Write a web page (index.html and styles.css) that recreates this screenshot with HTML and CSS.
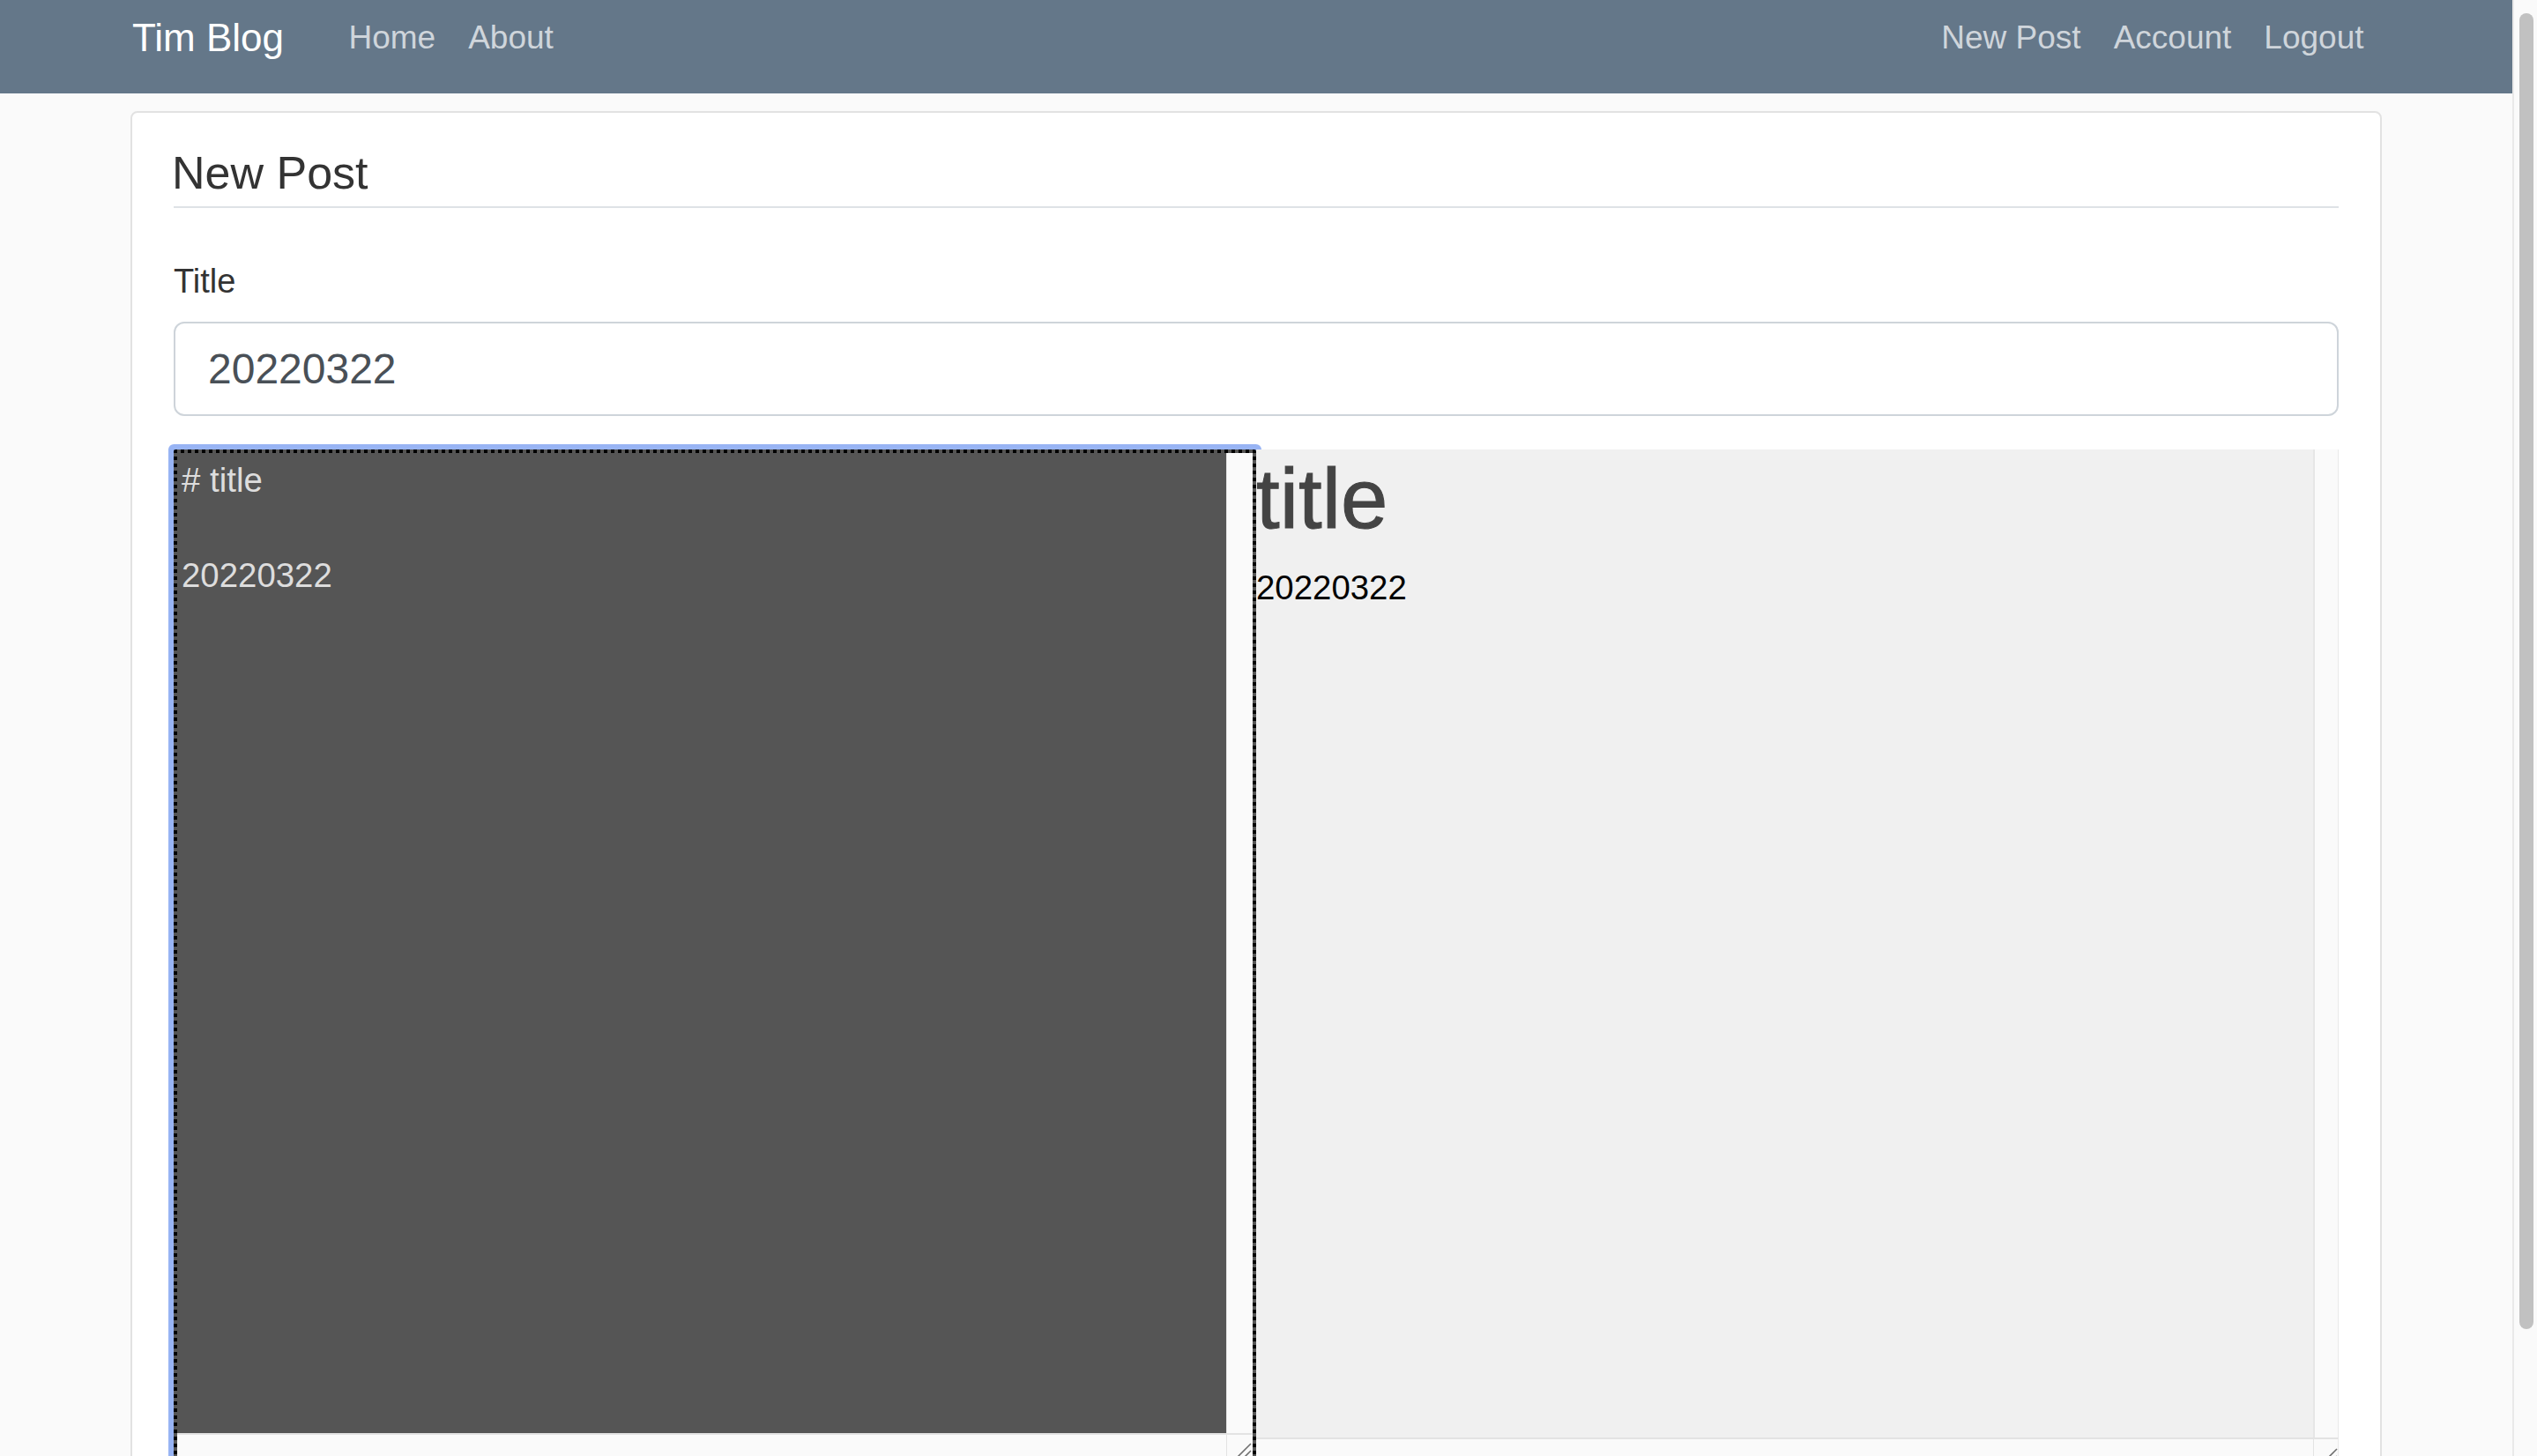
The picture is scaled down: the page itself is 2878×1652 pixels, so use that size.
FILE: index.html
```html
<!DOCTYPE html>
<html lang="en">
<head>
<meta charset="utf-8">
<title>Tim Blog - New Post</title>
<link rel="stylesheet" href="styles.css">
</head>
<body>
<div class="page">
  <div class="main">
    <nav class="navbar">
      <div class="nav-inner">
        <a class="brand" href="#">Tim Blog</a>
        <div class="nav-links">
          <a class="nav-link" href="#">Home</a>
          <a class="nav-link" href="#">About</a>
        </div>
        <div class="nav-links nav-right">
          <a class="nav-link" href="#">New Post</a>
          <a class="nav-link" href="#">Account</a>
          <a class="nav-link" href="#">Logout</a>
        </div>
      </div>
    </nav>
    <div class="container">
      <div class="card">
        <h3 class="card-title">New Post</h3>
        <label class="field-label" for="title">Title</label>
        <input class="title-input" id="title" type="text" value="20220322">
        <div class="editor-row">
          <div class="editor-frame">
            <div class="sbox editor-box">
              <div class="editor-text"># title

20220322</div>
              <div class="vtrack"></div>
              <div class="htrack"></div>
              <div class="corner">
                <svg class="grip" width="30" height="30" viewBox="0 0 30 30"><line x1="12" y1="28" x2="28" y2="12"/><line x1="20" y1="28" x2="28" y2="20"/></svg>
              </div>
            </div>
          </div>
          <div class="sbox preview-box">
            <div class="preview-content">
              <h1 class="preview-h1">title</h1>
              <p class="preview-p">20220322</p>
            </div>
            <div class="vtrack vtrack-preview"></div>
            <div class="htrack"></div>
            <div class="corner corner-preview">
              <svg class="grip" width="29" height="30" viewBox="0 0 29 30"><line x1="12" y1="29" x2="28" y2="13"/><line x1="20" y1="29" x2="28" y2="21"/></svg>
            </div>
          </div>
        </div>
      </div>
    </div>
  </div>
  <div class="scrollbar"><div class="thumb"></div></div>
</div>
</body>
</html>
```

FILE: styles.css
```css
html, body {
  margin: 0;
  padding: 0;
}

body {
  font-family: "Liberation Sans", Arial, Helvetica, sans-serif;
  background: #fafafa;
  overflow: hidden;
}

.page {
  display: flex;
  height: 1652px;
  overflow: hidden;
}

.main {
  flex: 1;
  min-width: 0;
  height: 1652px;
  overflow: hidden;
  background: #fafafa;
}

/* Navbar */
.navbar {
  height: 106px;
  background: #647789;
  box-sizing: border-box;
  padding-top: 10px;
}

.nav-inner {
  max-width: 2550px;
  margin: 0 auto;
  display: flex;
  align-items: flex-start;
}

.brand {
  font-size: 44px;
  line-height: 66px;
  color: #ffffff;
  text-decoration: none;
  margin-right: 55px;
  white-space: nowrap;
}

.nav-links {
  display: flex;
  margin-top: 6px;
}

.nav-right {
  margin-left: auto;
}

.nav-link {
  font-size: 37px;
  line-height: 54px;
  padding: 0 18.5px;
  color: #cfd5db;
  text-decoration: none;
  white-space: nowrap;
}

/* Card */
.container {
  max-width: 2554px;
  margin: 20px auto 0;
}

.card {
  background: #ffffff;
  border: 2px solid #e2e2e2;
  border-radius: 8px;
  padding: 37px 47px 0;
  height: 1700px;
  box-sizing: border-box;
}

.card-title {
  margin: 0;
  font-size: 52px;
  line-height: 62px;
  font-weight: normal;
  color: #333333;
  padding-bottom: 7px;
  border-bottom: 2px solid #dee2e6;
  text-indent: -2px;
}

.field-label {
  display: block;
  margin: 55px 0 16.5px;
  font-size: 38px;
  line-height: 57.6px;
  color: #333333;
}

.title-input {
  display: block;
  width: 100%;
  height: 107px;
  box-sizing: border-box;
  border: 2px solid #ced4da;
  border-radius: 12px;
  padding: 0 37px;
  margin: 0;
  font-family: "Liberation Sans", Arial, Helvetica, sans-serif;
  font-size: 48px;
  color: #495057;
  background: #ffffff;
  outline: none;
}

/* Editor */
.editor-row {
  display: flex;
  margin-top: 38px;
}

.editor-frame {
  flex: 0 0 1228px;
  box-sizing: border-box;
  padding: 4px;
  border-radius: 2px;
  box-shadow: 0 0 0 6px #98b4f4;
  background:
    repeating-linear-gradient(to right, #000 0 4px, transparent 4px 8px) left top / 100% 4px no-repeat,
    repeating-linear-gradient(to right, #000 0 4px, transparent 4px 8px) left bottom / 100% 4px no-repeat,
    repeating-linear-gradient(to bottom, #000 0 4px, transparent 4px 8px) left top / 4px 100% no-repeat,
    repeating-linear-gradient(to bottom, #000 0 4px, transparent 4px 8px) right top / 4px 100% no-repeat,
    #555555;
}

.sbox {
  display: grid;
}

.editor-box {
  grid-template-columns: 1fr 30px;
  grid-template-rows: 1112px 30px;
}

.editor-text {
  background: #555555;
  color: #dddddd;
  font-size: 38.4px;
  line-height: 54px;
  padding: 4px 5px 3px;
  white-space: pre;
  overflow: hidden;
}

.vtrack {
  background: #fafafa;
  border-left: 1px solid #e4e4e4;
}

.htrack {
  background: #fafafa;
  border-top: 2px solid #e3e3e3;
}

.corner {
  background: #fafafa;
  border-top: 2px solid #e3e3e3;
  border-left: 1px solid #e3e3e3;
  position: relative;
  overflow: hidden;
}

.grip {
  position: absolute;
  right: 0;
  bottom: 0;
}

.grip line {
  stroke: #6e6e6e;
  stroke-width: 1.6;
}

.preview-box {
  flex: 1;
  min-width: 0;
  grid-template-columns: 1fr 29px;
  grid-template-rows: 1121px 30px;
}

.preview-content {
  background: #f0f0f0;
  overflow: hidden;
}

.vtrack-preview {
  border-left: 2px solid #e6e6e6;
  border-right: 1px solid #e9e9e9;
}

.corner-preview {
  border-right: 1px solid #e9e9e9;
}

.preview-h1 {
  margin: 0 0 16px;
  font-size: 96px;
  line-height: 112px;
  font-weight: normal;
  color: #444444;
  -webkit-text-stroke: 1px #444444;
}

.preview-p {
  margin: 0;
  font-size: 38.4px;
  line-height: 57.6px;
  color: #000000;
}

/* Page scrollbar */
.scrollbar {
  flex: 0 0 28px;
  box-sizing: border-box;
  height: 1652px;
  background: #fafafa;
  border-left: 2px solid #e9e9e9;
  padding-top: 15px;
}

.thumb {
  margin-left: 6px;
  width: 16px;
  height: 1493px;
  border-radius: 8px;
  background: #c1c1c1;
}
```
